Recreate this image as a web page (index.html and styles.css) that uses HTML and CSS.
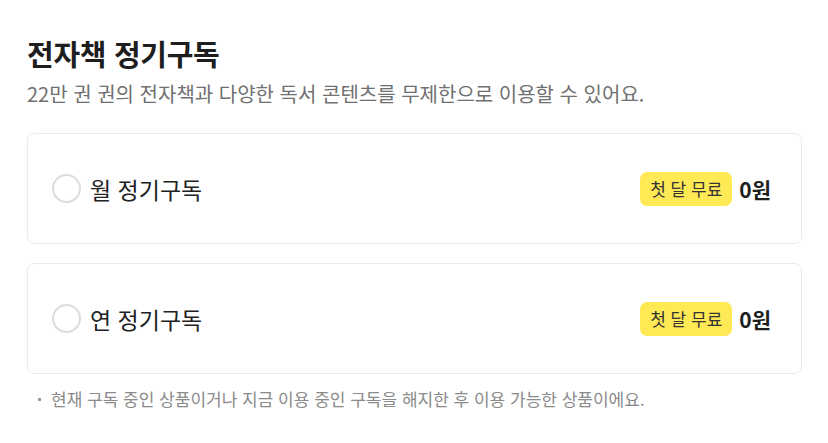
FILE: index.html
```html
<!DOCTYPE html>
<html lang="ko">
<head>
<meta charset="utf-8">
<link rel="stylesheet" href="styles.css">
</head>
<body>
<main class="page">
  <h1 class="title">전자책 정기구독</h1>
  <p class="desc">22만 권 권의 전자책과 다양한 독서 콘텐츠를 무제한으로 이용할 수 있어요.</p>
  <ul class="plans">
    <li class="plan">
      <span class="radio"></span>
      <span class="plan-name">월 정기구독</span>
      <span class="badge">첫 달 무료</span>
      <span class="price">0원</span>
    </li>
    <li class="plan">
      <span class="radio"></span>
      <span class="plan-name">연 정기구독</span>
      <span class="badge">첫 달 무료</span>
      <span class="price">0원</span>
    </li>
  </ul>
  <p class="note">현재 구독 중인 상품이거나 지금 이용 중인 구독을 해지한 후 이용 가능한 상품이에요.</p>
</main>
</body>
</html>
```
FILE: styles.css
```css
* { box-sizing: border-box; }
html, body { margin: 0; padding: 0; background: #fff; }
body {
  font-family: "Noto Sans CJK KR", "Noto Sans", sans-serif;
  color: #222;
}
.page {
  padding: 33px 26px 0 27px;
}
.title {
  margin: 0;
  font-size: 29px;
  font-weight: 700;
  line-height: 40px;
  color: #1e1e1e;
  letter-spacing: -0.3px;
}
.desc {
  margin: 7px 0 0;
  font-size: 20px;
  line-height: 28px;
  color: #707070;
}
.plans {
  list-style: none;
  margin: 25px 0 0;
  padding: 0;
  display: flex;
  flex-direction: column;
  gap: 19px;
}
.plan {
  height: 111px;
  border: 1px solid #ebebeb;
  border-radius: 7px;
  display: flex;
  align-items: center;
  padding: 0 30px 0 24px;
}
.radio {
  width: 29px;
  height: 29px;
  border: 2px solid #dcdcdc;
  border-radius: 50%;
  flex: none;
}
.plan-name {
  margin-left: 9px;
  font-size: 23px;
  color: #222;
  flex: 1;
}
.badge {
  background: #ffe955;
  border-radius: 7px;
  height: 34px;
  padding: 0 10px;
  display: flex;
  align-items: center;
  font-size: 17px;
  color: #333;
}
.price {
  margin-left: 7px;
  font-size: 21px;
  font-weight: 700;
  color: #1e1e1e;
}
.note {
  margin: 13px 0 0;
  padding-left: 24px;
  position: relative;
  font-size: 17px;
  line-height: 24px;
  color: #8a8a8a;
}
.note::before {
  content: "";
  position: absolute;
  left: 11px;
  top: 11px;
  width: 3px;
  height: 3px;
  background: #999;
}
```
